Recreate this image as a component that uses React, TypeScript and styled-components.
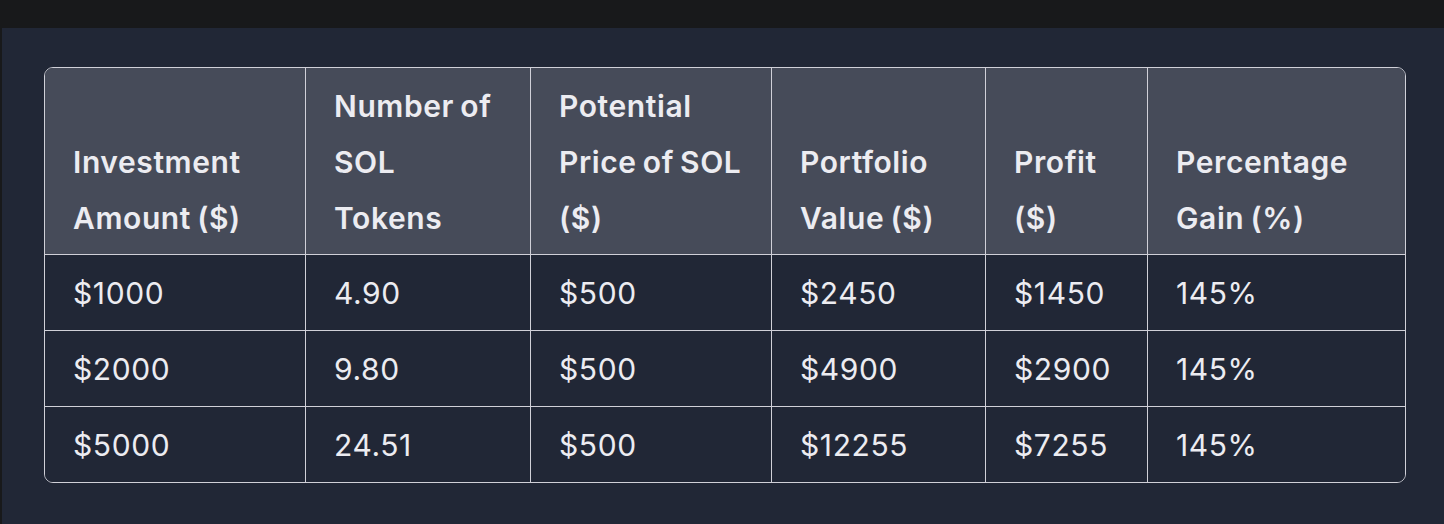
import React from "react";
import styled, { createGlobalStyle } from "styled-components";

const Global = createGlobalStyle`
  html, body { margin: 0; padding: 0; background: #18191b; }
  body { font-family: Inter, "Noto Sans", "Liberation Sans", sans-serif; }
`;

const Page = styled.div`
  width: 1444px;
  height: 524px;
  display: flex;
  flex-direction: column;
  background: #18191b;
  overflow: hidden;
`;

const TopBar = styled.div`
  height: 28px;
  flex: none;
  background: #18191b;
`;

const Panel = styled.div`
  flex: 1;
  margin-left: 2px;
  background: #212736;
  padding: 39px 40px 0 42px;
`;

const Table = styled.table`
  width: 1360px;
  border-collapse: separate;
  border-spacing: 0;
  table-layout: fixed;
  color: #ececf1;
  font-size: 30px;
  letter-spacing: 0.6px;
  word-spacing: -2px;
  border: 1px solid #d0d0d8;
  border-radius: 9px;
  overflow: hidden;
`;

const Th = styled.th`
  background: #464b59;
  font-weight: 600;
  text-align: left;
  vertical-align: bottom;
  line-height: 56px;
  padding: 10px 24px 8px 28px;
  border-bottom: 1px solid #d0d0d8;
  &:not(:last-child) { border-right: 1px solid #d0d0d8; }
`;

const Td = styled.td<{ $last?: boolean }>`
  background: #212736;
  font-weight: 400;
  line-height: 56px;
  padding: 10px 24px 9px 28px;
  border-bottom: ${(p) => (p.$last ? "none" : "1px solid #d0d0d8")};
  &:not(:last-child) { border-right: 1px solid #d0d0d8; }
`;

const cols = [261, 225, 241, 214, 162, 257];
const headers = [
  "Investment Amount ($)",
  "Number of SOL Tokens",
  "Potential Price of SOL ($)",
  "Portfolio Value ($)",
  "Profit ($)",
  "Percentage Gain (%)",
];
const rows = [
  ["$1000", "4.90", "$500", "$2450", "$1450", "145%"],
  ["$2000", "9.80", "$500", "$4900", "$2900", "145%"],
  ["$5000", "24.51", "$500", "$12255", "$7255", "145%"],
];

export default function App() {
  return (
    <>
      <Global />
      <Page>
        <TopBar />
        <Panel>
          <Table>
            <colgroup>
              {cols.map((w, i) => (
                <col key={i} style={{ width: w }} />
              ))}
            </colgroup>
            <thead>
              <tr>
                {headers.map((h) => (
                  <Th key={h}>{h}</Th>
                ))}
              </tr>
            </thead>
            <tbody>
              {rows.map((r, ri) => (
                <tr key={ri}>
                  {r.map((c, ci) => (
                    <Td key={ci} $last={ri === rows.length - 1}>
                      {c}
                    </Td>
                  ))}
                </tr>
              ))}
            </tbody>
          </Table>
        </Panel>
      </Page>
    </>
  );
}
